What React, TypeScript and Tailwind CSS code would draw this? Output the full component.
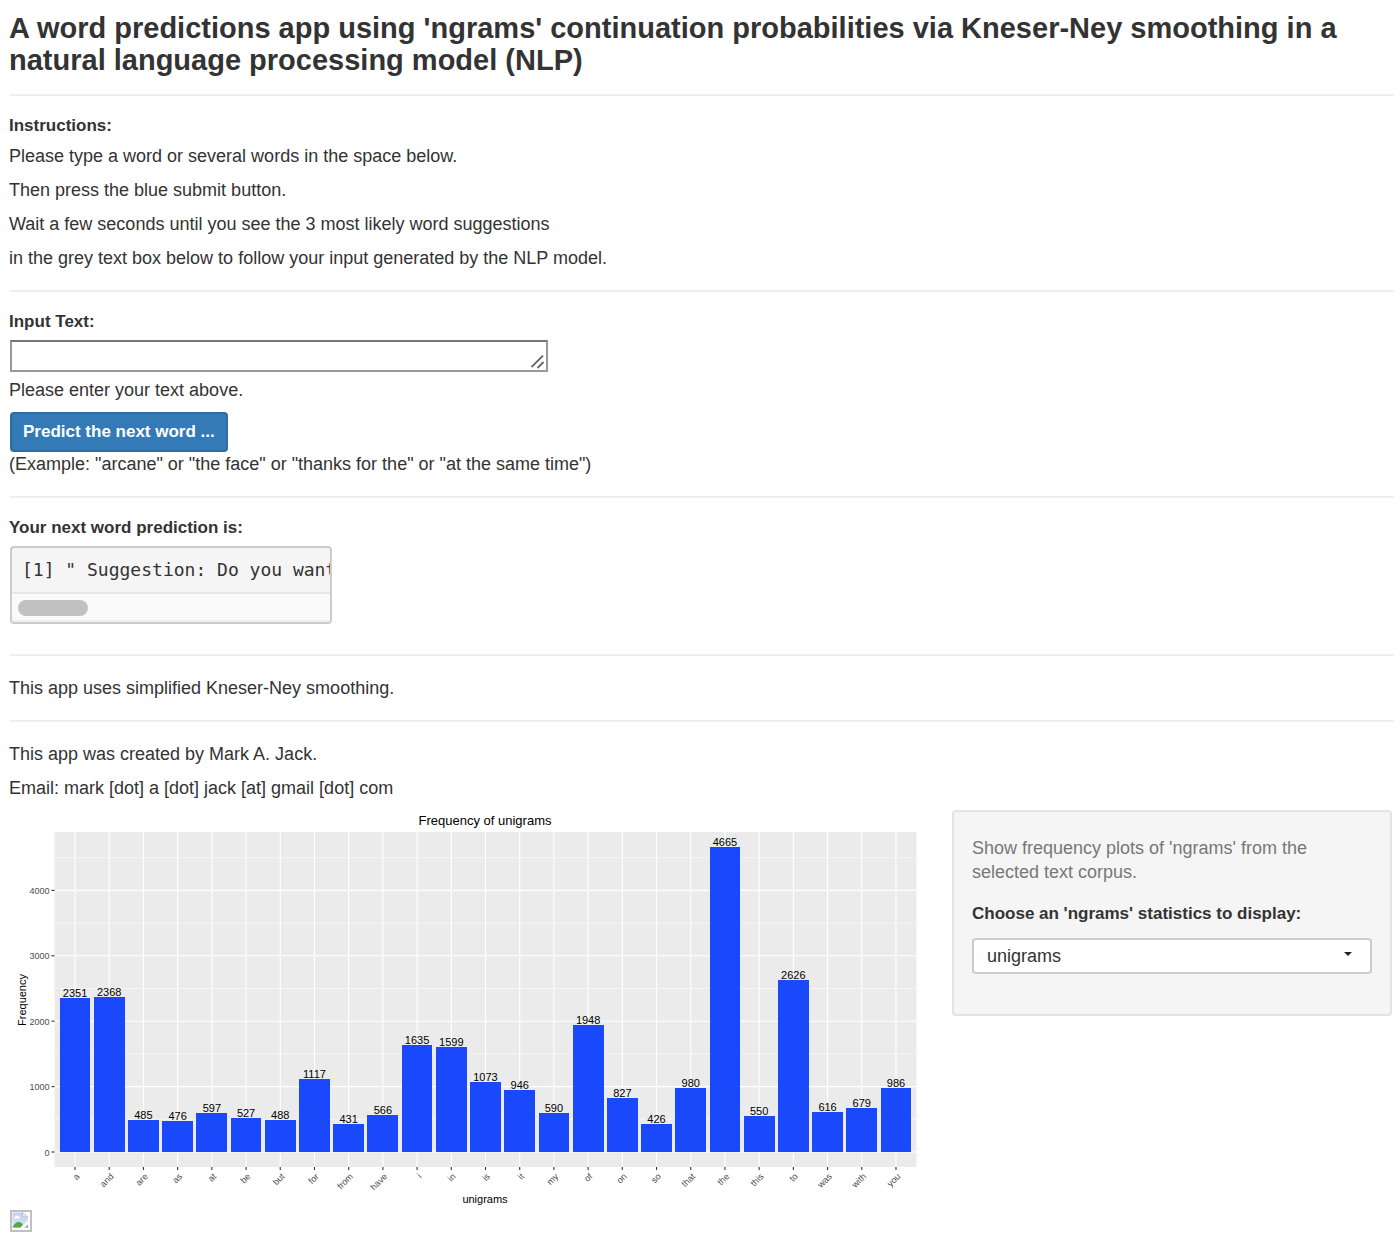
import { useState } from "react";

type Entry = { word: string; count: number };

const unigrams: Entry[] = [
  { word: "a", count: 2351 },
  { word: "and", count: 2368 },
  { word: "are", count: 485 },
  { word: "as", count: 476 },
  { word: "at", count: 597 },
  { word: "be", count: 527 },
  { word: "but", count: 488 },
  { word: "for", count: 1117 },
  { word: "from", count: 431 },
  { word: "have", count: 566 },
  { word: "i", count: 1635 },
  { word: "in", count: 1599 },
  { word: "is", count: 1073 },
  { word: "it", count: 946 },
  { word: "my", count: 590 },
  { word: "of", count: 1948 },
  { word: "on", count: 827 },
  { word: "so", count: 426 },
  { word: "that", count: 980 },
  { word: "the", count: 4665 },
  { word: "this", count: 550 },
  { word: "to", count: 2626 },
  { word: "was", count: 616 },
  { word: "with", count: 679 },
  { word: "you", count: 986 },
];

const panel = { left: 44.5, right: 906.5, top: 22, bottom: 357 };
const step = (panel.right - panel.left) / (unigrams.length + 0.2);
const barWidth = step * 0.9;
const xOf = (i: number) => panel.left + step * (0.6 + i);
const yOf = (n: number) => 342 - n * 0.0654;

function FrequencyChart() {
  return (
    <svg viewBox="0 0 912 400" className="block h-auto w-full" role="img" aria-label="Frequency of unigrams">
      <rect x={panel.left} y={panel.top} width={panel.right - panel.left} height={panel.bottom - panel.top} fill="#ebebeb" />
      {[500, 1500, 2500, 3500, 4500].map((n) => (
        <line key={n} x1={panel.left} x2={panel.right} y1={yOf(n)} y2={yOf(n)} stroke="#fff" strokeWidth="0.5" />
      ))}
      {[0, 1000, 2000, 3000, 4000].map((n) => (
        <g key={n}>
          <line x1={panel.left} x2={panel.right} y1={yOf(n)} y2={yOf(n)} stroke="#fff" strokeWidth="1.1" />
          <line x1={panel.left - 3} x2={panel.left} y1={yOf(n)} y2={yOf(n)} stroke="#333" strokeWidth="1.1" />
          <text x={panel.left - 5} y={yOf(n) + 3.5} textAnchor="end" fontSize="9" fill="#4d4d4d">
            {n}
          </text>
        </g>
      ))}
      {unigrams.map((d, i) => (
        <g key={d.word}>
          <line x1={xOf(i)} x2={xOf(i)} y1={panel.top} y2={panel.bottom} stroke="#fff" strokeWidth="1.1" />
          <line x1={xOf(i)} x2={xOf(i)} y1={panel.bottom} y2={panel.bottom + 3} stroke="#333" strokeWidth="1.1" />
        </g>
      ))}
      {unigrams.map((d, i) => (
        <g key={d.word}>
          <rect x={xOf(i) - barWidth / 2} y={yOf(d.count)} width={barWidth} height={yOf(0) - yOf(d.count)} fill="#1a48fb" shapeRendering="crispEdges" />
          <text x={xOf(i)} y={yOf(d.count) - 1} textAnchor="middle" fontSize="11" fill="#000">
            {d.count}
          </text>
          <text x={xOf(i) + 5} y={367} textAnchor="end" fontSize="9" fill="#4d4d4d" transform={`rotate(-45 ${xOf(i) + 5} 367)`}>
            {d.word}
          </text>
        </g>
      ))}
      <text x="475" y="15" textAnchor="middle" fontSize="13">
        Frequency of unigrams
      </text>
      <text x="475" y="393" textAnchor="middle" fontSize="11">
        unigrams
      </text>
      <text x="16" y="190" textAnchor="middle" fontSize="11" transform="rotate(-90 16 190)">
        Frequency
      </text>
    </svg>
  );
}

function BrokenImageIcon() {
  return (
    <svg viewBox="0 0 22 22" className="block size-[22px]" role="img" aria-label="Missing image">
      <defs>
        <linearGradient id="sky" x1="0" y1="0" x2="0" y2="1">
          <stop offset="0" stopColor="#bdd1f5" />
          <stop offset="1" stopColor="#dbe5f8" />
        </linearGradient>
      </defs>
      <rect x="1" y="1" width="20" height="20" fill="#fff" stroke="#c0c0c0" strokeWidth="2" />
      <path d="M2.5 2.500h10.500l5 4.500v11H2.500z" fill="url(#sky)" />
      <path d="M4 8c0-1.300 1-1.800 1.800-1.500 .5-1.500 2.500-1.400 2.800 0 1.500 0 1.700 1.700.4 2H5c-.6 0-1 0-1-.5z" fill="#fff" />
      <path d="M2.500 17.500c1.500-3.500 3.500-5.500 6-5.500 2 0 3.500 1.200 4.500 2.500L10.500 17.500z" fill="#55a83a" />
      <path d="M15 17.500l3-2.500v2.500z" fill="#6cb553" />
      <path d="M10.500 18L18 10.500v3L13.500 18z" fill="#fff" />
      <path d="M12.500 2.500v4.500h5.500z" fill="#ececec" stroke="#b5b5b5" strokeWidth="0.7" />
      <path d="M13.800 2h4.700v4z" fill="#fff" />
    </svg>
  );
}

function Rule() {
  return <hr className="ml-px border-t-2 border-[#eeeeee]" />;
}

export default function App() {
  const [text, setText] = useState("");
  const [stat, setStat] = useState("unigrams");

  return (
    <main className="bg-white pt-3 pr-1.5 pb-3.5 pl-[9px] font-['Liberation_Sans',Arial,sans-serif] text-[18px] leading-6 text-[#333333]">
      <h1 className="mb-[18px] text-[29px] leading-8 font-bold">
        A word predictions app using 'ngrams' continuation probabilities via Kneser-Ney smoothing in a natural language
        processing model (NLP)
      </h1>
      <Rule />

      <section className="mt-[18px] mb-5">
        <h2 className="mb-1.5 text-[17px] leading-6 font-bold">Instructions:</h2>
        <div className="space-y-2.5">
          <p>Please type a word or several words in the space below.</p>
          <p>Then press the blue submit button.</p>
          <p>Wait a few seconds until you see the 3 most likely word suggestions</p>
          <p>in the grey text box below to follow your input generated by the NLP model.</p>
        </div>
      </section>
      <Rule />

      <form className="mt-[18px] mb-5" onSubmit={(e) => e.preventDefault()}>
        <label htmlFor="input-text" className="mb-1.5 block text-[17px] leading-6 font-bold">
          Input Text:
        </label>
        <div className="relative ml-px w-[538px] max-w-full">
          <textarea
            id="input-text"
            rows={1}
            value={text}
            onChange={(e) => setText(e.target.value)}
            className="block h-8 w-full resize-none overflow-hidden border-2 border-[#999999] border-t-[#767676] bg-white px-1 outline-none"
          />
          <svg viewBox="0 0 14 14" className="pointer-events-none absolute right-[3px] bottom-[3px] size-3.5" aria-hidden="true">
            <path d="M0.500 12L12 0.500M6.500 13L12.500 7" stroke="#666" strokeWidth="1.8" fill="none" />
          </svg>
        </div>
        <p className="mt-1.5 mb-2.5">Please enter your text above.</p>
        <button
          type="submit"
          className="ml-px block h-10 rounded-[4px] border-2 border-[#2e6da4] bg-[#337ab7] px-[11px] text-[17px] leading-6 font-bold text-white"
        >
          Predict the next word ...
        </button>
        <p>(Example: "arcane" or "the face" or "thanks for the" or "at the same time")</p>
      </form>
      <Rule />

      <section className="mt-[18px] mb-[30px]">
        <h2 className="mb-1.5 text-[17px] leading-6 font-bold">Your next word prediction is:</h2>
        <div className="ml-px w-[322px] max-w-full overflow-hidden rounded-[4px] border-2 border-[#cccccc] bg-[#f5f5f5]">
          <pre className="overflow-hidden px-2.5 py-2.5 font-['DejaVu_Sans_Mono',monospace] text-[18px] leading-6">
            {'[1] " Suggestion: Do you want'}
          </pre>
          <div className="h-[30px] border-t-2 border-b-2 border-t-[#e6e6e6] border-b-[#eeeeee] bg-[#fafafa] px-1.5 py-1.5">
            <div className="h-4 w-[70px] rounded-full bg-[#c1c1c1]" />
          </div>
        </div>
      </section>
      <Rule />

      <p className="my-5">This app uses simplified Kneser-Ney smoothing.</p>
      <Rule />

      <footer className="my-5 mb-2.5 space-y-2.5">
        <p>This app was created by Mark A. Jack.</p>
        <p>Email: mark [dot] a [dot] jack [at] gmail [dot] com</p>
      </footer>

      <div className="mr-0.5 ml-px grid grid-cols-[912fr_440fr] items-start gap-[30px]">
        <FrequencyChart />
        <aside className="rounded-[4px] border-2 border-[#e3e3e3] bg-[#f5f5f5] px-[18px] pt-6 pb-10">
          <p className="mb-[18px] text-[#777777]">Show frequency plots of 'ngrams' from the selected text corpus.</p>
          <label htmlFor="ngram-stat" className="mb-3 block text-[17px] leading-6 font-bold">
            Choose an 'ngrams' statistics to display:
          </label>
          <div className="relative">
            <select
              id="ngram-stat"
              value={stat}
              onChange={(e) => setStat(e.target.value)}
              className="block h-9 w-full appearance-none rounded-[4px] border-2 border-[#cccccc] bg-white px-[13px] outline-none"
            >
              <option value="unigrams">unigrams</option>
              <option value="bigrams">bigrams</option>
              <option value="trigrams">trigrams</option>
            </select>
            <svg viewBox="0 0 8 4" className="pointer-events-none absolute top-3.5 right-5 h-1 w-2" aria-hidden="true">
              <path d="M0 0h8L4 4z" fill="#222" />
            </svg>
          </div>
        </aside>
      </div>

      <div className="ml-px">
        <BrokenImageIcon />
      </div>
    </main>
  );
}
